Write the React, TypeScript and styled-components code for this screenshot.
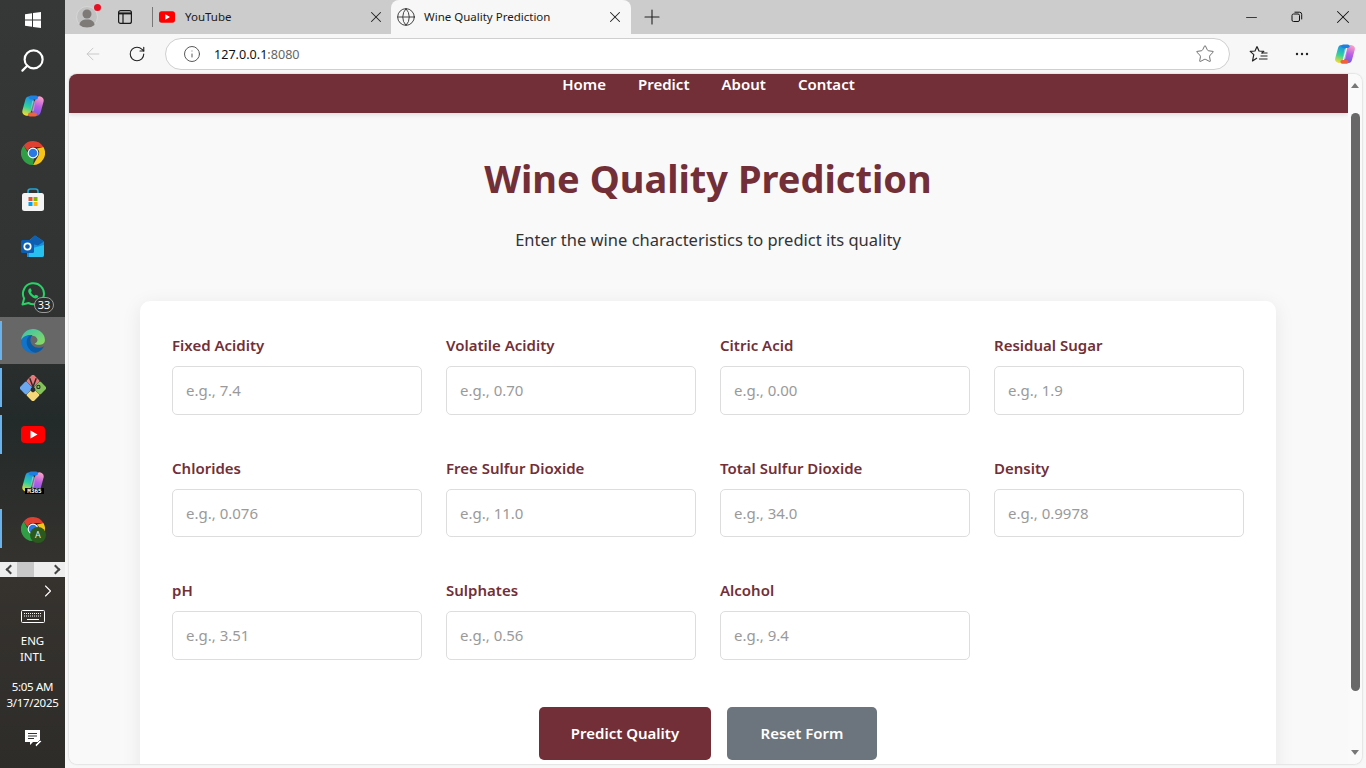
import React from 'react'
import styled, { createGlobalStyle } from 'styled-components'
import { ArrowLeft, ChevronRight, Globe, Info, Minus, Plus, RotateCw, Search, Star, X } from 'lucide-react'

const wine = '#722f37'

const fields = [
  ['Fixed Acidity', 'e.g., 7.4'],
  ['Volatile Acidity', 'e.g., 0.70'],
  ['Citric Acid', 'e.g., 0.00'],
  ['Residual Sugar', 'e.g., 1.9'],
  ['Chlorides', 'e.g., 0.076'],
  ['Free Sulfur Dioxide', 'e.g., 11.0'],
  ['Total Sulfur Dioxide', 'e.g., 34.0'],
  ['Density', 'e.g., 0.9978'],
  ['pH', 'e.g., 3.51'],
  ['Sulphates', 'e.g., 0.56'],
  ['Alcohol', 'e.g., 9.4'],
]

const CopilotLogo = ({ size = 24 }: { size?: number }) => (
  <svg width={size} height={size} viewBox="0 0 24 24" fill="none" strokeLinecap="round">
    <defs>
      <linearGradient id="copA" gradientUnits="userSpaceOnUse" x1="10" y1="3" x2="4" y2="21">
        <stop offset="0" stopColor="#1d8fe8" />
        <stop offset="0.55" stopColor="#2fd0a0" />
        <stop offset="1" stopColor="#f4dc2e" />
      </linearGradient>
      <linearGradient id="copB" gradientUnits="userSpaceOnUse" x1="20" y1="4" x2="14" y2="21">
        <stop offset="0" stopColor="#f49bc8" />
        <stop offset="0.5" stopColor="#b95de2" />
        <stop offset="1" stopColor="#6a5fe8" />
      </linearGradient>
    </defs>
    <path d="M8.500 6.500L5.500 17.500" stroke="url(#copA)" strokeWidth="8.500" />
    <path d="M18.500 6.500L15.500 17.500" stroke="url(#copB)" strokeWidth="8.500" />
    <path d="M10 3.500h5" stroke="#1f7fe0" strokeWidth="4" />
    <path d="M9 20.500h5" stroke="#f0603c" strokeWidth="4" />
    <path d="M12.500 8l-1 8" stroke="#fff" strokeOpacity=".35" strokeWidth="3" />
  </svg>
)

const ChromeLogo = () => (
  <svg width="24" height="24" viewBox="0 0 24 24">
    <path d="M12 0a12 12 0 0 1 10.400 6H12a6 6 0 0 0-5.600 3.800L2.700 4.400A12 12 0 0 1 12 0z" fill="#de4032" />
    <path d="M22.400 6A12 12 0 0 1 12 24l5.200-9A6 6 0 0 0 16 7.500z" fill="#f5c518" />
    <path d="M12 24A12 12 0 0 1 2.700 4.400L7 12a6 6 0 0 0 6 5.500l-1 6.500z" fill="#2f9e44" />
    <circle cx="12" cy="12" r="5.400" fill="#fff" />
    <circle cx="12" cy="12" r="4.300" fill="#2a78e4" />
  </svg>
)

const StoreLogo = () => (
  <svg width="24" height="24" viewBox="0 0 24 24">
    <path d="M7 6V3.500C7 2 8 1 9.500 1h5C16 1 17 2 17 3.500V6" fill="none" stroke="#1ea7d8" strokeWidth="1.600" />
    <rect x="1" y="5" width="22" height="18" rx="2.500" fill="#f4f4f4" />
    <rect x="7.500" y="9" width="4" height="4" fill="#e8502e" />
    <rect x="12.500" y="9" width="4" height="4" fill="#7fba00" />
    <rect x="7.500" y="14" width="4" height="4" fill="#00a4ef" />
    <rect x="12.500" y="14" width="4" height="4" fill="#ffb900" />
  </svg>
)

const OutlookLogo = () => (
  <svg width="24" height="24" viewBox="0 0 24 24">
    <path d="M14 .5l9 6V20a2 2 0 0 1-2 2H6V7z" fill="#1490df" />
    <path d="M14 .5l9 6-6 4-11-3z" fill="#0f5fb0" />
    <path d="M8 14l15-4v10a2 2 0 0 1-2 2H8z" fill="#28c0ee" />
    <rect x="0" y="5" width="13" height="13" rx="1.500" fill="#0a5fb4" />
    <circle cx="6.500" cy="11.500" r="3.200" fill="none" stroke="#fff" strokeWidth="1.700" />
  </svg>
)

const WhatsappLogo = () => (
  <svg width="24" height="24" viewBox="0 0 24 24">
    <path d="M1.500 22.500l1.600-6A10.500 10.500 0 1 1 7.500 21z" fill="none" stroke="#25d366" strokeWidth="2" strokeLinejoin="round" />
    <path d="M8 7c1-1 1.700-.8 2.200.4l.6 1.500-1 1.400c.8 1.500 2 2.700 3.600 3.500l1.400-1.100 1.800.9c1 .5 1 1.200.2 2-1.200 1.200-3 1-5-.2-2-1.200-3.500-2.900-4.300-4.800C7 9.400 7.100 8 8 7z" fill="#25d366" />
  </svg>
)

const EdgeLogo = () => (
  <svg width="26" height="26" viewBox="0 0 24 24">
    <defs>
      <linearGradient id="edgeA" x1="0" y1="0" x2="1" y2="1">
        <stop offset="0" stopColor="#35c1b0" />
        <stop offset="1" stopColor="#8fdc5a" />
      </linearGradient>
    </defs>
    <path d="M1 11C2 4.500 7 1 12 1c6.500 0 11 5 11 10 0 3-2.500 4.500-5.500 4.500-2 0-3.500-.6-4-1.300 2-.5 3-2 2.500-4C15 7.500 12 6.500 9 7.500 5 8.800 2.500 10.500 1 11z" fill="url(#edgeA)" />
    <path d="M1 11c1.500-2.500 5-5 9-4.500-3.500 2.500-4.500 8 .5 13 1 1 2 2 3.500 3.300C6 24 .5 18 1 11z" fill="#1173c9" />
    <path d="M10 6.500c-3 1.500-4.500 5-3.500 9 1 3 3.500 6.500 7.500 7.300 4-.5 7-3 8-6-3 2-8 2.200-10.500-.8-2.500-3-2.500-7 0-9.500z" fill="#0c59a4" />
  </svg>
)

const KrakenLogo = () => (
  <svg width="26" height="26" viewBox="0 0 24 24">
    <rect x="7.500" y="1" width="9" height="9" rx="1.300" transform="rotate(45 12 5.500)" fill="#e8787a" />
    <rect x="1" y="7.500" width="9" height="9" rx="1.300" transform="rotate(45 5.500 12)" fill="#6aa8f0" />
    <rect x="14" y="7.500" width="9" height="9" rx="1.300" transform="rotate(45 18.500 12)" fill="#84c25a" />
    <rect x="7.500" y="14" width="9" height="9" rx="1.300" transform="rotate(45 12 18.500)" fill="#f6d878" />
    <path d="M9 3l3 8 3-8M12 11v5" fill="none" stroke="#2b2b2b" strokeWidth="1.400" />
    <circle cx="12" cy="13.500" r="2.200" fill="#2b2b2b" />
    <circle cx="17" cy="11" r="1.500" fill="none" stroke="#2b2b2b" />
  </svg>
)

const YoutubeLogo = ({ w = 24, h = 17 }: { w?: number; h?: number }) => (
  <svg width={w} height={h} viewBox="0 0 24 17">
    <rect x="0" y="0" width="24" height="17" rx="4" fill="#f00" />
    <path d="M9.500 4.500l7 4-7 4z" fill="#fff" />
  </svg>
)

const KeyboardIcon = () => (
  <svg width="24" height="14" viewBox="0 0 24 14" fill="none" stroke="#fff">
    <rect x="0.500" y="0.500" width="23" height="12" rx="1" />
    <path d="M3 3.500h18M3 6h18" strokeDasharray="1 1" />
    <path d="M6 9.500h12" />
  </svg>
)

const NotificationIcon = () => (
  <svg width="18" height="18" viewBox="0 0 18 18">
    <path d="M1 1h15v12H9l-3 3v-3H1z" fill="#fff" />
    <path d="M4 4.500h9M4 7h9M4 9.500h6" stroke="#333" strokeWidth="1" />
    <path d="M11 16l5-5 1.500 1.500-5 5z" fill="#fff" stroke="#333" strokeWidth=".7" />
  </svg>
)

const ProfileIcon = () => (
  <svg width="22" height="22" viewBox="0 0 22 22">
    <circle cx="11" cy="11" r="10.500" fill="#c2c2c2" stroke="#d6d6d6" />
    <circle cx="11" cy="8" r="4.500" fill="#7d7a78" />
    <path d="M3.500 19c0-3.500 3-5.500 7.500-5.500s7.500 2 7.500 5.500c-2 1.700-4.500 2.500-7.500 2.500S5.500 20.700 3.500 19z" fill="#7d7a78" />
  </svg>
)

const VerticalTabsIcon = () => (
  <svg width="16" height="16" viewBox="0 0 16 16" fill="none" stroke="#1a1a1a" strokeWidth="1.200">
    <rect x="1.600" y="1.600" width="12.800" height="12.800" rx="2" />
    <path d="M6 5v9.400" />
    <path d="M1.600 4.400h12.800" strokeWidth="2" />
  </svg>
)

const RestoreIcon = () => (
  <svg width="12" height="12" viewBox="0 0 12 12" fill="none" stroke="#111" strokeWidth="1">
    <rect x="1" y="3" width="7.500" height="7.500" rx="1.500" />
    <path d="M3.500 1.200h5a2.200 2.200 0 0 1 2.200 2.200v5" />
  </svg>
)

const FavoritesIcon = () => (
  <svg width="20" height="18" viewBox="0 0 20 18" fill="none" stroke="#222" strokeWidth="1.200">
    <path d="M8 1.500l2 4.500 4.800.4-2.200 2M8 1.500L6 6l-4.800.4 3.600 3.200L3.500 16 8 13" strokeLinejoin="round" />
    <path d="M12.500 8h6M11.500 11h7M10 14h8.500" />
  </svg>
)

const DotsIcon = () => (
  <svg width="14" height="4" viewBox="0 0 14 4" fill="#222">
    <circle cx="2" cy="2" r="1.200" />
    <circle cx="7" cy="2" r="1.200" />
    <circle cx="12" cy="2" r="1.200" />
  </svg>
)

const App = () => {
  return (
    <>
      <GlobalStyle />
      <Screen>
        <Taskbar>
          <StartButton>
            <svg width="16" height="16" viewBox="0 0 16 16" fill="#fff">
              <path d="M0 2.300l7-1v6.200H0zM8 1.100L16 0v7.500H8zM0 8.500h7v6.200l-7-1zM8 8.500h8V16l-8-1.100z" />
            </svg>
          </StartButton>
          <SearchSlot><Search size={27} color="#fff" strokeWidth={1.900} style={{ transform: 'scaleX(-1)' }} /></SearchSlot>
          <TaskIcon><CopilotLogo /></TaskIcon>
          <TaskIcon><ChromeLogo /></TaskIcon>
          <TaskIcon><StoreLogo /></TaskIcon>
          <TaskIcon><OutlookLogo /></TaskIcon>
          <TaskIcon>
            <WhatsappLogo />
            <CountBadge>33</CountBadge>
          </TaskIcon>
          <TaskIcon $active $running><EdgeLogo /></TaskIcon>
          <TaskIcon $running><KrakenLogo /></TaskIcon>
          <TaskIcon $running><YoutubeLogo /></TaskIcon>
          <TaskIcon>
            <CopilotLogo />
            <M365Badge>M365</M365Badge>
          </TaskIcon>
          <TaskIcon $running>
            <ChromeLogo />
            <ProfileBadge>A</ProfileBadge>
          </TaskIcon>
          <TaskScroller>
            <ScrollArrow $dir="left" />
            <ScrollKnob />
            <ScrollArrow $dir="right" />
          </TaskScroller>
          <Tray>
            <TrayChevron><ChevronRight size={20} color="#fff" strokeWidth={1.300} /></TrayChevron>
            <KeyboardIcon />
            <TrayLang>ENG<br />INTL</TrayLang>
            <TrayClock>5:05 AM<br />3/17/2025</TrayClock>
            <TrayNotify><NotificationIcon /></TrayNotify>
          </Tray>
        </Taskbar>

        <Browser>
          <TabStrip>
            <Profile>
              <ProfileIcon />
              <RedDot />
            </Profile>
            <StripButton><VerticalTabsIcon /></StripButton>
            <TabDivider />
            <Tab>
              <YoutubeLogo w={16} h={12} />
              <TabTitle>YouTube</TabTitle>
              <TabClose><X size={18} color="#222" strokeWidth={1.400} /></TabClose>
            </Tab>
            <Tab $active>
              <Globe size={20} color="#333" strokeWidth={1.100} />
              <TabTitle>Wine Quality Prediction</TabTitle>
              <TabClose><X size={18} color="#222" strokeWidth={1.400} /></TabClose>
            </Tab>
            <NewTab><Plus size={24} color="#222" strokeWidth={1.100} /></NewTab>
            <WindowControls>
              <WindowButton><Minus size={17} color="#111" strokeWidth={1.100} /></WindowButton>
              <WindowButton><RestoreIcon /></WindowButton>
              <WindowButton><X size={22} color="#111" strokeWidth={1.100} /></WindowButton>
            </WindowControls>
          </TabStrip>

          <Toolbar>
            <NavIcon><ArrowLeft size={20} color="#c9c9c9" strokeWidth={1.200} /></NavIcon>
            <NavIcon><RotateCw size={18} color="#222" strokeWidth={1.500} /></NavIcon>
            <AddressBar>
              <Info size={18} color="#555" strokeWidth={1.300} />
              <Url>127.0.0.1<UrlPort>:8080</UrlPort></Url>
              <Star size={20} color="#666" strokeWidth={1.100} />
            </AddressBar>
            <ToolIcons>
              <ToolIcon><FavoritesIcon /></ToolIcon>
              <ToolIcon><DotsIcon /></ToolIcon>
              <ToolIcon><CopilotLogo size={22} /></ToolIcon>
            </ToolIcons>
          </Toolbar>

          <Viewport>
            <Page>
              <TopNav>
                <NavLink>Home</NavLink>
                <NavLink>Predict</NavLink>
                <NavLink>About</NavLink>
                <NavLink>Contact</NavLink>
              </TopNav>
              <Main>
                <Title>Wine Quality Prediction</Title>
                <Subtitle>Enter the wine characteristics to predict its quality</Subtitle>
                <Card>
                  <FormGrid>
                    {fields.map(([label, hint]) => (
                      <Field key={label}>
                        <FieldLabel>{label}</FieldLabel>
                        <FieldInput placeholder={hint} />
                      </Field>
                    ))}
                  </FormGrid>
                  <Actions>
                    <ActionButton $bg={wine} $w={172}>Predict Quality</ActionButton>
                    <ActionButton $bg="#6c757d" $w={150}>Reset Form</ActionButton>
                  </Actions>
                </Card>
              </Main>
            </Page>
            <Scrollbar>
              <ArrowUp />
              <Thumb />
              <ArrowDown />
            </Scrollbar>
          </Viewport>
        </Browser>
      </Screen>
    </>
  )
}

export default App

const GlobalStyle = createGlobalStyle`
  html, body {
    margin: 0;
    height: 100%;
    overflow: hidden;
  }
  * {
    box-sizing: border-box;
  }
`

const Screen = styled.div`
  display: flex;
  width: 1366px;
  height: 768px;
  overflow: hidden;
  font-family: "Noto Sans", "Open Sans", sans-serif;
`

const Taskbar = styled.aside`
  width: 65px;
  flex: none;
  display: flex;
  flex-direction: column;
  background: linear-gradient(180deg, #353836 0%, #303331 40%, #232a2a 55%, #36332f 75%, #2e2c29 100%);
`

const StartButton = styled.div`
  height: 35px;
  display: flex;
  align-items: center;
  justify-content: center;
  padding-top: 4px;
`

const TaskIcon = styled.div<{ $active?: boolean; $running?: boolean }>`
  position: relative;
  height: 47px;
  display: flex;
  align-items: center;
  justify-content: center;
  background: ${({ $active }) => ($active ? '#676767' : 'transparent')};

  &::before {
    content: '';
    display: ${({ $running }) => ($running ? 'block' : 'none')};
    position: absolute;
    left: 0;
    top: 4px;
    bottom: 4px;
    width: 2px;
    background: #6cb2ea;
  }
`

const SearchSlot = styled(TaskIcon)`
  padding-top: 3px;
`

const CountBadge = styled.span`
  position: absolute;
  left: 34px;
  top: 27px;
  width: 20px;
  height: 16px;
  border: 1px solid #9a9a9a;
  border-radius: 8px;
  background: #2c2f2d;
  color: #fff;
  font-size: 11px;
  line-height: 14px;
  text-align: center;
`

const M365Badge = styled.span`
  position: absolute;
  left: 25px;
  top: 30px;
  width: 19px;
  height: 6px;
  background: #000;
  color: #fff;
  font-family: "DejaVu Sans Mono", monospace;
  font-size: 6px;
  font-weight: 700;
  line-height: 6px;
  text-align: center;
`

const ProfileBadge = styled.span`
  position: absolute;
  left: 30px;
  top: 22px;
  width: 16px;
  height: 16px;
  border-radius: 50%;
  background: #2a5a1e;
  color: #e8e8e8;
  font-size: 9px;
  line-height: 16px;
  text-align: center;
`

const TaskScroller = styled.div`
  height: 15px;
  margin-top: 10px;
  display: flex;
  align-items: center;
  justify-content: space-between;
  padding: 0 4px 0 5px;
  background: #eeeeee;
`

const ScrollKnob = styled.div`
  width: 17px;
  height: 15px;
  background: #c8c8c8;
  margin-right: 16px;
`

const ScrollArrow = styled.div<{ $dir: 'left' | 'right' }>`
  width: 7px;
  height: 7px;
  border-left: 2px solid #444;
  border-bottom: 2px solid #444;
  transform: rotate(${({ $dir }) => ($dir === 'left' ? '45deg' : '225deg')});
  margin: ${({ $dir }) => ($dir === 'left' ? '0 0 0 2px' : '0 2px 0 0')};
`

const Tray = styled.div`
  flex: 1;
  display: flex;
  flex-direction: column;
  align-items: center;
  color: #fff;
  font-size: 11.500px;
  text-align: center;
`

const TrayChevron = styled.div`
  align-self: flex-end;
  height: 25px;
  margin: 1px 7px 7px 0;
  display: flex;
  align-items: center;
`

const TrayLang = styled.div`
  margin-top: 9px;
  line-height: 16px;
`

const TrayClock = styled.div`
  margin-top: 14px;
  line-height: 16px;
  white-space: nowrap;
  letter-spacing: -0.3px;
`

const TrayNotify = styled.div`
  margin-top: 18px;
`

const Browser = styled.div`
  flex: 1;
  min-width: 0;
  display: flex;
  flex-direction: column;
  background: #f7f7f7;
`

const TabStrip = styled.div`
  height: 34px;
  flex: none;
  display: flex;
  align-items: center;
  background: #cccccc;
`

const Profile = styled.div`
  position: relative;
  width: 22px;
  height: 22px;
  margin-left: 11px;
`

const RedDot = styled.span`
  position: absolute;
  right: -3px;
  top: -2px;
  width: 7px;
  height: 7px;
  border-radius: 50%;
  background: #e81123;
`

const StripButton = styled.div`
  width: 16px;
  height: 16px;
  margin-left: 19px;
  display: flex;
`

const TabDivider = styled.div`
  width: 1px;
  height: 20px;
  margin-left: 19px;
  background: #777;
`

const Tab = styled.div<{ $active?: boolean }>`
  width: ${({ $active }) => ($active ? '240px' : '238px')};
  height: 34px;
  flex: none;
  display: flex;
  align-items: center;
  gap: ${({ $active }) => ($active ? '8px' : '10px')};
  padding: ${({ $active }) => ($active ? '0 7px 0 5px' : '0 6px 0 6px')};
  border-radius: 8px 8px 0 0;
  background: ${({ $active }) => ($active ? '#f7f7f7' : 'transparent')};
`

const TabTitle = styled.span`
  flex: 1;
  padding-bottom: 2px;
  font-size: 11.500px;
  color: #1a1a1a;
  white-space: nowrap;
`

const TabClose = styled.span`
  display: flex;
  width: 18px;
  height: 18px;
`

const NewTab = styled.div`
  margin-left: 9px;
  display: flex;
`

const WindowControls = styled.div`
  margin-left: auto;
  display: flex;
`

const WindowButton = styled.div`
  width: 46px;
  height: 34px;
  display: flex;
  align-items: center;
  justify-content: center;
`

const Toolbar = styled.div`
  height: 40px;
  flex: none;
  display: flex;
  align-items: center;
  padding: 0 0 0 12px;
`

const NavIcon = styled.div`
  width: 32px;
  height: 32px;
  flex: none;
  display: flex;
  align-items: center;
  justify-content: center;
  margin-right: 12px;
`

const ToolIcon = styled(NavIcon)`
  margin-right: 11px;
`

const AddressBar = styled.div`
  width: 1065px;
  height: 32px;
  flex: none;
  align-self: flex-start;
  margin-top: 4px;
  display: flex;
  align-items: center;
  padding: 0 14px 0 17px;
  border: 1px solid #cfcfcf;
  border-radius: 16px;
  background: #fff;
`

const Url = styled.div`
  flex: 1;
  margin-left: 13px;
  font-size: 12.600px;
  color: #111;
`

const UrlPort = styled.span`
  color: #666;
`

const ToolIcons = styled.div`
  display: flex;
  margin-left: 13px;
`

const Viewport = styled.div`
  flex: 1;
  min-height: 0;
  display: flex;
  margin: 0 4px 4px 4px;
  border-radius: 8px;
  overflow: hidden;
  background: #f9f9f9;
  box-shadow: 0 0 2px rgba(0, 0, 0, 0.25);
`

const Page = styled.div`
  flex: 1;
  min-width: 0;
  overflow: hidden;
  background: #f9f9f9;
`

const TopNav = styled.nav`
  height: 39px;
  display: flex;
  justify-content: center;
  gap: 32px;
  background: ${wine};
  box-shadow: 0 2px 4px rgba(0, 0, 0, 0.1);
`

const NavLink = styled.a`
  color: #fff;
  font-size: 15px;
  font-weight: 600;
  line-height: 20px;
`

const Main = styled.main`
  padding: 0 72px 0 71px;
  text-align: center;
`

const Title = styled.h1`
  margin: 39px 0 0;
  font-size: 38px;
  font-weight: 700;
  line-height: 52px;
  color: ${wine};
`

const Subtitle = styled.p`
  margin: 24px 0 0;
  font-size: 16.500px;
  line-height: 24px;
  color: #333;
`

const Card = styled.section`
  margin-top: 49px;
  padding: 32px 32px 40px;
  border-radius: 10px;
  background: #fff;
  box-shadow: 0 4px 20px rgba(0, 0, 0, 0.08);
  text-align: left;
`

const FormGrid = styled.div`
  display: grid;
  grid-template-columns: repeat(4, 250px);
  column-gap: 24px;
  row-gap: 41px;
`

const Field = styled.div`
  display: flex;
  flex-direction: column;
  gap: 8px;
`

const FieldLabel = styled.label`
  font-size: 15px;
  font-weight: 600;
  line-height: 25px;
  color: ${wine};
`

const FieldInput = styled.input`
  width: 100%;
  height: 48.500px;
  padding: 0 13px;
  border: 1px solid #ddd;
  border-radius: 5px;
  outline: none;
  font-family: inherit;
  font-size: 15px;
  color: #333;

  &::placeholder {
    color: #9a9a9a;
  }
`

const Actions = styled.div`
  margin-top: 47px;
  display: flex;
  justify-content: center;
  gap: 16px;
`

const ActionButton = styled.button<{ $bg: string; $w: number }>`
  width: ${({ $w }) => $w}px;
  height: 53px;
  border: none;
  border-radius: 5px;
  background: ${({ $bg }) => $bg};
  color: #fff;
  font-family: inherit;
  font-size: 15px;
  font-weight: 600;
`

const Scrollbar = styled.div`
  width: 14px;
  flex: none;
  display: flex;
  flex-direction: column;
  align-items: center;
  background: #fafafa;
`

const ArrowUp = styled.div`
  margin: 9px 0 25px;
  width: 0;
  height: 0;
  border-left: 4.500px solid transparent;
  border-right: 4.500px solid transparent;
  border-bottom: 5px solid #777;
`

const Thumb = styled.div`
  width: 9px;
  height: 578px;
  border-radius: 5px;
  background: #686868;
`

const ArrowDown = styled.div`
  margin-top: 59px;
  width: 0;
  height: 0;
  border-left: 4.500px solid transparent;
  border-right: 4.500px solid transparent;
  border-top: 5px solid #777;
`
